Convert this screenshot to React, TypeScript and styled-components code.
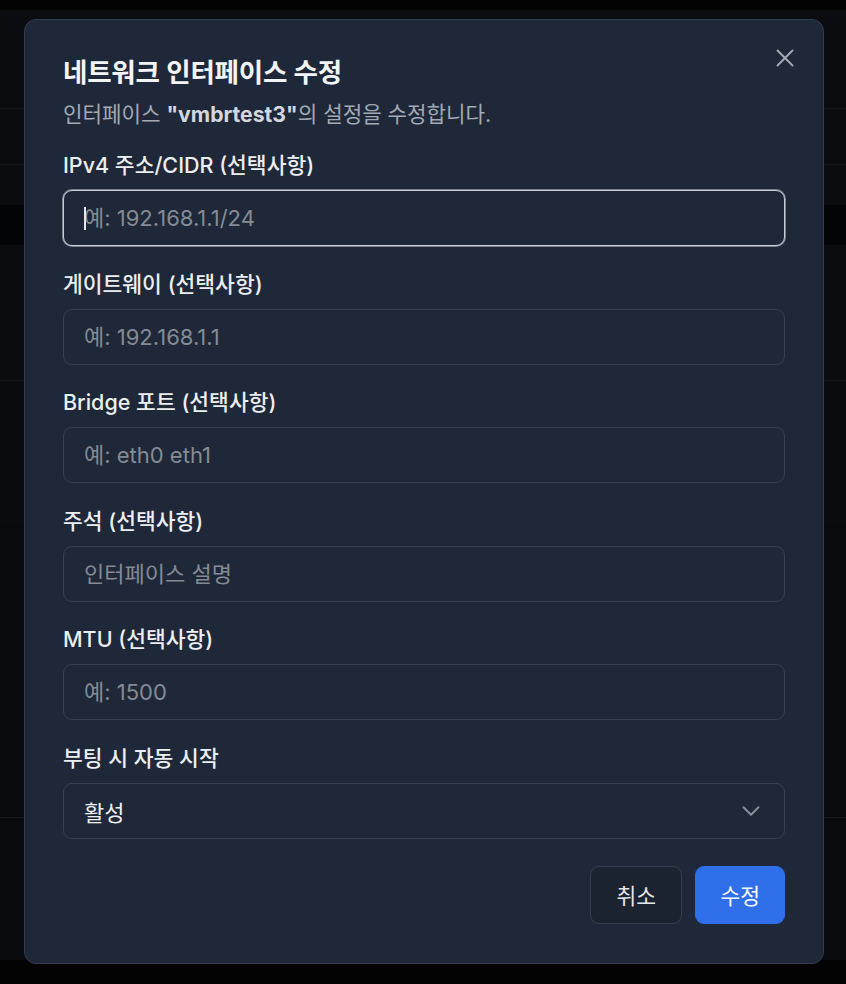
import React from 'react'
import styled, { createGlobalStyle } from 'styled-components'
import { X, ChevronDown } from 'lucide-react'

const GlobalStyle = createGlobalStyle`
  html, body {
    margin: 0;
    padding: 0;
    background: #030304;
    font-family: Inter, "Noto Sans CJK KR", "Noto Sans", sans-serif;
    -webkit-font-smoothing: antialiased;
  }
  * { box-sizing: border-box; }
`

const fields = [
  { label: 'IPv4 주소/CIDR (선택사항)', placeholder: '예: 192.168.1.1/24', focused: true },
  { label: '게이트웨이 (선택사항)', placeholder: '예: 192.168.1.1' },
  { label: 'Bridge 포트 (선택사항)', placeholder: '예: eth0 eth1' },
  { label: '주석 (선택사항)', placeholder: '인터페이스 설명' },
  { label: 'MTU (선택사항)', placeholder: '예: 1500' },
]

// dimmed page rows behind the dialog
const bgRows = [
  { h: 10, tone: '#030304' },
  { h: 99, tone: '#0a0c10', line: true },
  { h: 56, tone: '#0a0c10', line: true },
  { h: 40, tone: '#0a0c10' },
  { h: 40, tone: '#030405' },
  { h: 136, tone: '#0a0c10', line: true },
  { h: 142, tone: '#090b0f' },
  { h: 295, tone: '#080a0e', line: true },
  { h: 142, tone: '#080a0e' },
  { h: 24, tone: '#030304' },
]

const App = (): JSX.Element => {
  return (
    <Page>
      <GlobalStyle />
      <Backdrop>
        {bgRows.map((r, i) => (
          <BgRow key={i} tone={r.tone} line={r.line} style={{ height: r.h }} />
        ))}
      </Backdrop>
      <Dialog>
        <CloseButton aria-label="닫기">
          <X size={30} strokeWidth={1.5} />
        </CloseButton>
        <Header>
          <Title>네트워크 인터페이스 수정</Title>
          <Description>
            인터페이스 <strong>"vmbrtest3"</strong>의 설정을 수정합니다.
          </Description>
        </Header>
        <Form>
          {fields.map((f) => (
            <Field key={f.label}>
              <Label>{f.label}</Label>
              <InputWrap>
                {f.focused && <Caret />}
                <Input placeholder={f.placeholder} focused={f.focused} />
              </InputWrap>
            </Field>
          ))}
          <Field>
            <Label>부팅 시 자동 시작</Label>
            <Select>
              <span>활성</span>
              <ChevronDown size={30} strokeWidth={1.5} />
            </Select>
          </Field>
        </Form>
        <Footer>
          <Button>취소</Button>
          <Button primary>수정</Button>
        </Footer>
      </Dialog>
    </Page>
  )
}

export default App

const Page = styled.div`
position:relative;
width:846px;
height:984px;
overflow:hidden;
`
const Backdrop = styled.div`
display:flex;
flex-direction:column;
`
const BgRow = styled.div<{ tone: string; line?: boolean }>`
background:${({ tone }) => tone};
border-bottom:${({ line }) => (line ? '1px solid #14171c' : 'none')};
`
const Dialog = styled.div`
position:absolute;
left:24px;
top:19px;
width:800px;
height:945px;
background:#1f2838;
border:1px solid #323c4d;
border-radius:12px;
padding:35px 38px 40px 38px;
display:flex;
flex-direction:column;
`
const CloseButton = styled.button`
position:absolute;
top:23px;
right:23px;
background:none;
border:none;
padding:0;
display:flex;
color:#a3a8b1;
cursor:pointer;
`
const Header = styled.div`
display:flex;
flex-direction:column;
gap:11px;
`
const Title = styled.h2`
margin:0;
font-size:26.5px;
line-height:34px;
font-weight:600;
color:#f3f4f6;
letter-spacing:-0.2px;
`
const Description = styled.p`
margin:0;
font-size:21.2px;
line-height:28px;
color:#a3a9b3;
strong{
  font-weight:700;
  color:#d3d7dd;
}
`
const Form = styled.div`
margin-top:23px;
display:flex;
flex-direction:column;
gap:23.5px;
`
const Field = styled.div`
display:flex;
flex-direction:column;
gap:11px;
`
const Label = styled.label`
font-size:21.5px;
line-height:28px;
font-weight:500;
color:#eceef1;
`
const InputWrap = styled.div`
position:relative;
`
const Caret = styled.span`
position:absolute;
left:21px;
top:17px;
width:1.5px;
height:23px;
background:#e5e7eb;
`
const Input = styled.input<{ focused?: boolean }>`
height:56px;
width:100%;
padding:0 20px;
border-radius:9px;
background:#1f2838;
border:1px solid ${({ focused }) => (focused ? '#c9ced6' : '#374151')};
box-shadow:${({ focused }) => (focused ? '0 0 0 1px rgba(201,206,214,0.55)' : 'none')};
font-family:inherit;
font-size:22px;
color:#f3f4f6;
outline:none;
&::placeholder{
  color:#858b94;
}
`
const Select = styled.div`
height:56px;
padding:0 18px 0 20px;
border-radius:9px;
border:1px solid #374151;
display:flex;
align-items:center;
justify-content:space-between;
font-size:22px;
color:#eef0f3;
svg{
  color:#8a909a;
}
`
const Footer = styled.div`
margin-top:27px;
display:flex;
justify-content:flex-end;
gap:13px;
`
const Button = styled.button<{ primary?: boolean }>`
height:58px;
padding:0 ${({ primary }) => (primary ? '24px' : '25.5px')};
border-radius:9px;
font-family:inherit;
font-size:21.5px;
font-weight:400;
cursor:pointer;
background:${({ primary }) => (primary ? '#2f6fea' : '#1b2230')};
color:${({ primary }) => (primary ? '#ffffff' : '#e5e7eb')};
border:1px solid ${({ primary }) => (primary ? '#2f6fea' : '#353e4e')};
`
